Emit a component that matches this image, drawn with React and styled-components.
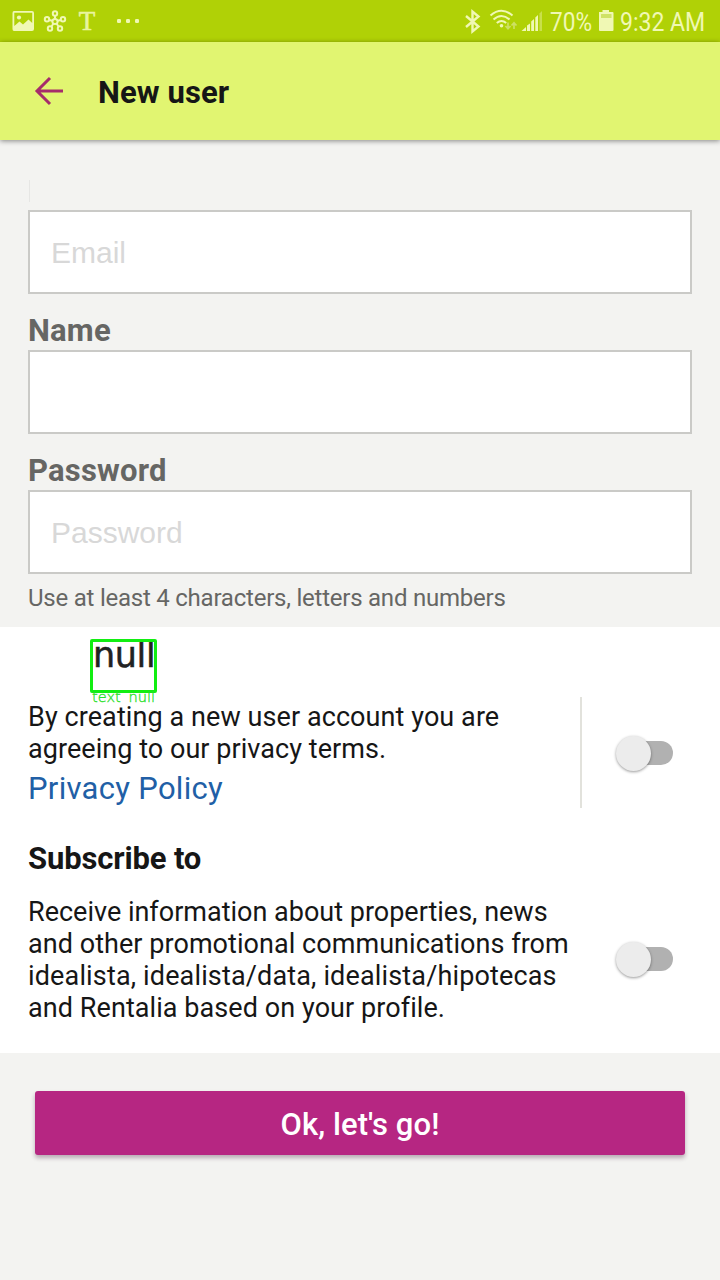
import React from 'react';
import styled, { createGlobalStyle } from 'styled-components';

const GlobalStyle = createGlobalStyle`
  * { box-sizing: border-box; }
  body { margin: 0; background: #f3f3f1; font-family: Roboto, "Liberation Sans", sans-serif; }
`;

const Page = styled.div`
  width: 720px;
  height: 1280px;
  overflow: hidden;
  display: flex;
  flex-direction: column;
  background: #f3f3f1;
  color: #161616;
`;

const StatusBar = styled.header`
  height: 42px;
  flex: none;
  display: flex;
  justify-content: space-between;
  background: #b0d106;
  color: #f0f8b4;
`;

const StatusIcons = styled.svg`
  display: block;
  flex: none;
`;

const StatusRight = styled.div`
  display: flex;
  width: 260px;
`;

const StatusText = styled.span`
  display: block;
  flex: none;
  width: ${(p) => p.$width}px;
  font-size: 26px;
  line-height: 44px;
  white-space: nowrap;
  transform: scaleX(${(p) => p.$squeeze});
  transform-origin: 0 50%;
`;

const AppBar = styled.div`
  height: 98px;
  flex: none;
  display: flex;
  align-items: center;
  padding: 2px 0 0 34px;
  background: #e1f571;
  box-shadow: 0 1px 5px rgba(0, 0, 0, 0.45);
  z-index: 1;
`;

const BackIcon = styled.svg`
  display: block;
  margin: -3px 34px 0 0;
`;

const Title = styled.h1`
  margin: 2px 0 0;
  font-size: 31px;
  line-height: 36px;
  font-weight: 700;
  letter-spacing: ${(p) => p.$spacing || 0}px;
`;

const Form = styled.section`
  height: 487px;
  flex: none;
  padding: 30px 28px 0;
`;

const Label = styled.label`
  display: block;
  height: 56px;
  padding-top: 19px;
  font-size: 31px;
  line-height: 36px;
  font-weight: 700;
  letter-spacing: ${(p) => p.$spacing || 0}px;
  color: #666664;
`;

const CaretRow = styled.div`
  height: 40px;
  padding: 10px 0 0 1px;
`;

const Caret = styled.span`
  display: block;
  width: 1px;
  height: 22px;
  background: #e6e6e4;
`;

const Field = styled.input`
  display: block;
  width: 664px;
  height: 84px;
  padding: 2px 22px 0 21px;
  border: 2px solid #cacac7;
  border-radius: 0;
  outline: none;
  background: #fff;
  font: 30px "Liberation Sans", Arial, sans-serif;
  &::placeholder { color: #d8d8d8; opacity: 1; }
`;

const Hint = styled.p`
  margin: 10px 0 0;
  font-size: 24px;
  line-height: 28px;
  letter-spacing: ${(p) => p.$spacing || 0}px;
  color: #666664;
`;

const Consent = styled.section`
  position: relative;
  height: 426px;
  flex: none;
  padding: 70px 28px 0;
  background: #fff;
`;

const Row = styled.div`
  display: flex;
  align-items: ${(p) => p.$align || 'center'};
`;

const Copy = styled.div`
  width: ${(p) => p.$width}px;
  height: ${(p) => p.$height}px;
  border-right: ${(p) => (p.$divider ? '2px solid #e2e2dc' : '0')};
`;

const Line = styled.span`
  display: block;
  font-size: 27px;
  line-height: 32px;
  white-space: nowrap;
  letter-spacing: ${(p) => p.$spacing || 0}px;
`;

const Paragraph = styled.p`
  margin: 0;
  padding-top: 4px;
`;

const PolicyLink = styled.a`
  display: block;
  margin-top: 6px;
  font-size: 31px;
  line-height: 36px;
  letter-spacing: ${(p) => p.$spacing || 0}px;
  color: #215fa6;
`;

const Subtitle = styled.h2`
  margin: 33px 0 19px;
  font-size: 31px;
  line-height: 36px;
  font-weight: 700;
  letter-spacing: ${(p) => p.$spacing || 0}px;
`;

const SwitchTrack = styled.button`
  display: flex;
  align-items: center;
  width: 56px;
  height: 24px;
  margin: ${(p) => p.$top || 0}px 0 0 ${(p) => p.$left}px;
  padding: 0;
  border: 0;
  border-radius: 12px;
  background: #b1b1b1;
`;

const SwitchThumb = styled.span`
  width: 35px;
  height: 35px;
  flex: none;
  margin-left: -1px;
  border-radius: 50%;
  background: #ececec;
  box-shadow: 0 1px 3px rgba(0, 0, 0, 0.4);
`;

const Detection = styled.div`
  position: absolute;
  left: 90px;
  top: 12px;
  width: 68px;
  font-family: "DejaVu Sans", sans-serif;
`;

const DetectionBox = styled.div`
  width: 67px;
  height: 54px;
  border: 3px solid #12ee12;
  border-radius: 2px;
  overflow: hidden;
  font-size: 35px;
  line-height: 26px;
  letter-spacing: -0.4px;
  color: #222;
  -webkit-text-stroke: 0.5px #222;
`;

const DetectionLabel = styled.div`
  padding-left: 2px;
  font-size: 14.6px;
  font-weight: 200;
  line-height: 8px;
  word-spacing: 3px;
  white-space: nowrap;
  color: #2be02b;
  -webkit-text-stroke: 0.35px #2be02b;
`;

const Submit = styled.button`
  width: 650px;
  height: 64px;
  flex: none;
  margin: 38px 35px 0;
  padding: 4px 0 0;
  border: 0;
  border-radius: 3px;
  background: #b62682;
  box-shadow: 0 3px 4px rgba(60, 20, 50, 0.32);
  color: #fff;
  font: 500 31px/36px Roboto, sans-serif;
  letter-spacing: ${(p) => p.$spacing || 0}px;
`;

function Switch({ left, top }) {
  return (
    <SwitchTrack $left={left} $top={top} role="switch" aria-checked="false">
      <SwitchThumb />
    </SwitchTrack>
  );
}

function NotificationIcons() {
  return (
    <StatusIcons width="150" height="42" viewBox="0 0 150 42">
      <path fill="#f0f8b4" fillRule="evenodd" d="M14 11H32Q34 11 34 13V29Q34 31 32 31H14Q12.500 31 12.500 29V13Q12.500 11 14 11ZM14.300 12.800V26L19.500 21.500L23 24.500L28.500 19.500L32.200 23V12.800Z" />
      <circle cx="19" cy="17.500" r="2.100" fill="#f0f8b4" />
      <g fill="none" stroke="#f0f8b4" strokeWidth="2">
        <circle cx="55" cy="21.500" r="2.600" />
        <circle cx="55" cy="13.500" r="2.200" />
        <circle cx="47" cy="19.300" r="2.200" />
        <circle cx="63" cy="19.300" r="2.200" />
        <circle cx="50" cy="28.500" r="2.200" />
        <circle cx="60" cy="28.500" r="2.200" />
        <path d="M55 16V18.700M49.300 20L52.300 20.800M60.700 20L57.700 20.800M51.500 26.500L53.300 23.800M58.500 26.500L56.700 23.800" />
      </g>
      <text x="87" y="30" textAnchor="middle" fontFamily="Liberation Serif" fontSize="27" fill="#e9f4a0" stroke="#e9f4a0" strokeWidth="0.600">T</text>
      <g fill="#f0f8b4">
        <rect x="117" y="19" width="4" height="4" rx="1.300" />
        <rect x="126" y="19" width="4" height="4" rx="1.300" />
        <rect x="135" y="19" width="4" height="4" rx="1.300" />
      </g>
    </StatusIcons>
  );
}

function RadioIcons() {
  return (
    <StatusIcons width="90" height="42" viewBox="460 0 90 42">
      <path d="M466 16L478.500 26.500L472.500 31.500V11.500L478.500 16.500L466 27" fill="none" stroke="#f0f8b4" strokeWidth="2.400" />
      <g fill="none" stroke="#f0f8b4" strokeWidth="2.100">
        <path d="M490.500 15.500Q501.500 6 512.500 15.500M493.500 19.500Q501.500 12.500 509.500 19.500M496.800 23Q501.500 19 506.200 23" />
      </g>
      <circle cx="501.500" cy="25.700" r="1.800" fill="#f0f8b4" />
      <path d="M508 22.500V28.500M505.500 26L508 28.700L510.500 26M514 29V23M511.500 25.500L514 22.800L516.500 25.500" fill="none" stroke="#cde063" strokeWidth="1.700" />
      <g fill="#f0f8b4">
        <path d="M521.500 31L526 27V31Z" />
        <path d="M527 25.500L530 23.500V31H527Z" />
        <path d="M531.200 21.500L534 19V31H531.200Z" />
        <path d="M535.300 17.500L538 15V31H535.300Z" />
        <path d="M539.500 13.500L542 11V31H539.500Z" opacity="0.400" />
      </g>
    </StatusIcons>
  );
}

function BatteryIcon() {
  return (
    <StatusIcons width="25" height="42" viewBox="595 0 25 42">
      <path d="M599 12H602.500V10H609V12H612.500Q613.500 12 613.500 13V30Q613.500 31 612.500 31H600Q599 31 599 30Z" fill="#f0f8b4" />
      <path d="M601 14H611.500V18H601Z" fill="#cfe266" />
    </StatusIcons>
  );
}

export default function App() {
  return (
    <Page>
      <GlobalStyle />
      <StatusBar>
        <NotificationIcons />
        <StatusRight>
          <RadioIcons />
          <StatusText $width={45} $squeeze={0.87}>70%</StatusText>
          <BatteryIcon />
          <StatusText $width={100} $squeeze={0.885}>9:32 AM</StatusText>
        </StatusRight>
      </StatusBar>
      <AppBar>
        <BackIcon width="30" height="30" viewBox="0 0 30 30">
          <path d="M16 2L3 15L16 28M3 15H29" fill="none" stroke="#a62c6b" strokeWidth="3" />
        </BackIcon>
        <Title $spacing={0.1}>New user</Title>
      </AppBar>
      <Form>
        <CaretRow><Caret /></CaretRow>
        <Field placeholder="Email" aria-label="Email" />
        <Label $spacing={0.2}>Name</Label>
        <Field aria-label="Name" />
        <Label $spacing={0.2}>Password</Label>
        <Field placeholder="Password" aria-label="Password" />
        <Hint $spacing={-0.23}>Use at least 4 characters, letters and numbers</Hint>
      </Form>
      <Consent>
        <Detection>
          <DetectionBox>null</DetectionBox>
          <DetectionLabel>text null</DetectionLabel>
        </Detection>
        <Row>
          <Copy $width={554} $height={111} $divider>
            <Paragraph>
              <Line $spacing={0.08}>By creating a new user account you are</Line>
              <Line $spacing={0.05}>agreeing to our privacy terms.</Line>
            </Paragraph>
            <PolicyLink $spacing={0.3}>Privacy Policy</PolicyLink>
          </Copy>
          <Switch left={35} top={1} />
        </Row>
        <Subtitle $spacing={-0.15}>Subscribe to</Subtitle>
        <Row $align="flex-start">
          <Copy $width={554} $height={132}>
            <Line>Receive information about properties, news</Line>
            <Line $spacing={0.05}>and other promotional communications from</Line>
            <Line $spacing={0.15}>idealista, idealista/data, idealista/hipotecas</Line>
            <Line $spacing={0.07}>and Rentalia based on your profile.</Line>
          </Copy>
          <Switch left={35} top={51} />
        </Row>
      </Consent>
      <Submit $spacing={0.07}>Ok, let's go!</Submit>
    </Page>
  );
}
